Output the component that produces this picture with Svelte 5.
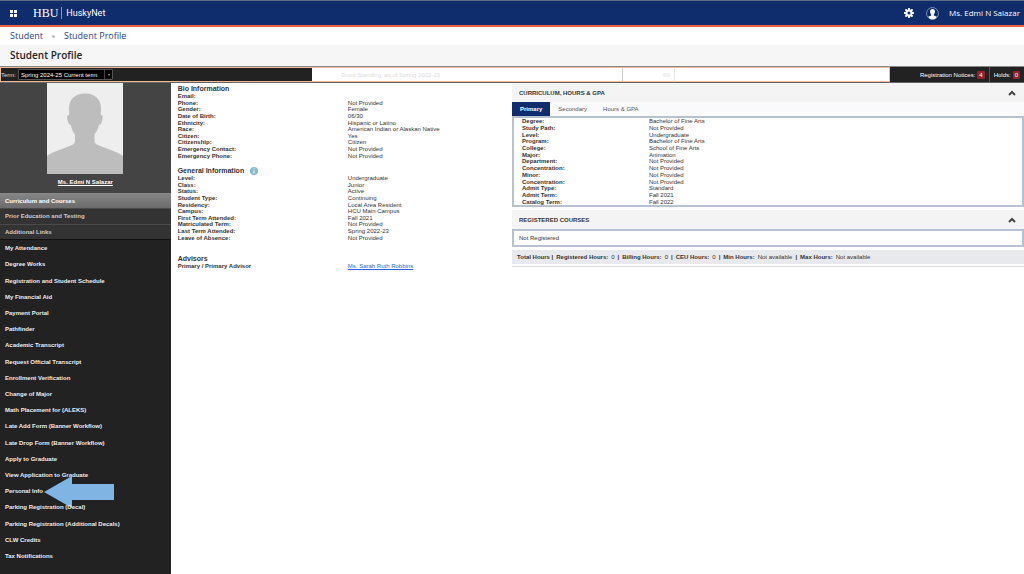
<script lang="ts">
  interface Row {
    label: string;
    value: string;
  }

  const bio: Row[] = [
    { label: 'Email:', value: '' },
    { label: 'Phone:', value: 'Not Provided' },
    { label: 'Gender:', value: 'Female' },
    { label: 'Date of Birth:', value: '06/30' },
    { label: 'Ethnicity:', value: 'Hispanic or Latino' },
    { label: 'Race:', value: 'American Indian or Alaskan Native' },
    { label: 'Citizen:', value: 'Yes' },
    { label: 'Citizenship:', value: 'Citizen' },
    { label: 'Emergency Contact:', value: 'Not Provided' },
    { label: 'Emergency Phone:', value: 'Not Provided' }
  ];

  const general: Row[] = [
    { label: 'Level:', value: 'Undergraduate' },
    { label: 'Class:', value: 'Junior' },
    { label: 'Status:', value: 'Active' },
    { label: 'Student Type:', value: 'Continuing' },
    { label: 'Residency:', value: 'Local Area Resident' },
    { label: 'Campus:', value: 'HCU Main Campus' },
    { label: 'First Term Attended:', value: 'Fall 2021' },
    { label: 'Matriculated Term:', value: 'Not Provided' },
    { label: 'Last Term Attended:', value: 'Spring 2022-23' },
    { label: 'Leave of Absence:', value: 'Not Provided' }
  ];

  const curriculum: Row[] = [
    { label: 'Degree:', value: 'Bachelor of Fine Arts' },
    { label: 'Study Path:', value: 'Not Provided' },
    { label: 'Level:', value: 'Undergraduate' },
    { label: 'Program:', value: 'Bachelor of Fine Arts' },
    { label: 'College:', value: 'School of Fine Arts' },
    { label: 'Major:', value: 'Animation' },
    { label: 'Department:', value: 'Not Provided' },
    { label: 'Concentration:', value: 'Not Provided' },
    { label: 'Minor:', value: 'Not Provided' },
    { label: 'Concentration:', value: 'Not Provided' },
    { label: 'Admit Type:', value: 'Standard' },
    { label: 'Admit Term:', value: 'Fall 2021' },
    { label: 'Catalog Term:', value: 'Fall 2022' }
  ];

  const sections = ['Curriculum and Courses', 'Prior Education and Testing', 'Additional Links'];
  let section = $state('Curriculum and Courses');

  const links = [
    'My Attendance',
    'Degree Works',
    'Registration and Student Schedule',
    'My Financial Aid',
    'Payment Portal',
    'Pathfinder',
    'Academic Transcript',
    'Request Official Transcript',
    'Enrollment Verification',
    'Change of Major',
    'Math Placement for (ALEKS)',
    'Late Add Form (Banner Workflow)',
    'Late Drop Form (Banner Workflow)',
    'Apply to Graduate',
    'View Application to Graduate',
    'Personal Info',
    'Parking Registration (Decal)',
    'Parking Registration (Additional Decals)',
    'CLW Credits',
    'Tax Notifications'
  ];
  const pointedLink = 'Personal Info';

  const tabs = ['Primary', 'Secondary', 'Hours & GPA'];
  let tab = $state('Primary');

  let showCurriculum = $state(true);
  let showCourses = $state(true);
</script>

{#snippet rows(items: Row[])}
  {#each items as item}
    <div class="row">
      <dt>{item.label}</dt>
      <dd>{item.value}</dd>
    </div>
  {/each}
{/snippet}

{#snippet chevron(open: boolean)}
  <svg class="chevron" class:closed={!open} viewBox="0 0 8 6" aria-hidden="true">
    <path d="M1 5 4 2l3 3" fill="none" stroke="#444" stroke-width="2" />
  </svg>
{/snippet}

<div class="page">
  <header class="navbar">
    <button class="icon-btn" aria-label="Menu">
      <svg class="apps" viewBox="0 0 7 7" aria-hidden="true">
        <path d="M0 0h3v3H0zM4 0h3v3H4zM0 4h3v3H0zM4 4h3v3H4z" fill="#fff" />
      </svg>
    </button>
    <a class="brand" href="#home">
      <span class="brand-mark">HBU</span>
      <span class="brand-name">HuskyNet</span>
    </a>
    <div class="user">
      <button class="icon-btn" aria-label="Settings">
        <svg class="gear" viewBox="0 0 20 20" aria-hidden="true">
          <g fill="#fff">
            <rect x="8" y="0" width="4" height="20" rx="1" />
            <rect x="8" y="0" width="4" height="20" rx="1" transform="rotate(45 10 10)" />
            <rect x="8" y="0" width="4" height="20" rx="1" transform="rotate(90 10 10)" />
            <rect x="8" y="0" width="4" height="20" rx="1" transform="rotate(135 10 10)" />
            <circle cx="10" cy="10" r="7" />
          </g>
          <circle cx="10" cy="10" r="3" fill="#0f2c6d" />
        </svg>
      </button>
      <a class="account" href="#account">
        <svg class="avatar" viewBox="0 0 24 24" aria-hidden="true">
          <circle cx="12" cy="12" r="11" fill="none" stroke="#8fa0c8" stroke-width="1.5" />
          <path
            d="M12 3.500c3 0 4.500 2 4.500 5 0 2.200-.8 4-2 5v2l5.500 2.300c-1.500 3-4.500 5-8 5s-6.500-2-8-5L9.500 15.500v-2c-1.200-1-2-2.800-2-5 0-3 1.500-5 4.500-5z"
            fill="#fff"
          />
        </svg>
        Ms. Edmi N Salazar
      </a>
    </div>
  </header>

  <nav class="breadcrumb" aria-label="Breadcrumb">
    <a href="#student">Student</a>
    <span class="dot"></span>
    <a href="#profile">Student Profile</a>
  </nav>
  <h1>Student Profile</h1>

  <div class="status">
    <div class="term">
      <label for="term">Term:</label>
      <div class="select">
        <select id="term">
          <option>Spring 2024-25 Current term</option>
        </select>
      </div>
    </div>
    <div class="standing">Good Standing, as of Spring 2022-23</div>
    <div class="hours">60</div>
    <div class="blank"></div>
    <div class="notices">
      <span class="notice">Registration Notices: <b>4</b></span>
      <span class="notice">Holds: <b>0</b></span>
    </div>
  </div>

  <div class="columns">
    <aside>
      <div class="profile">
        <svg class="photo" viewBox="0 0 76 91" role="img" aria-label="Profile photo">
          <rect width="76" height="91" fill="#eee" />
          <path
            d="M38 10.500c-10 0-16.500 6-16 16l.3 5.500c-2 0-2.500 1.500-2 4 .5 2.800 1.600 6 3.500 6 .8 4 2.200 7 4.200 9.500V58c0 2-1 3-3 4L6 69.500c-2 1-4 2-6 3.500v18h76V73c-2-1.500-4-2.500-6-3.500L51 62c-2-1-3.500-2-3.500-4v-6.500c2-2.500 3.700-5.500 4.500-9.500 2 0 3-3.200 3.500-6 .5-2.500 0-4-1.800-4l.3-5.500c.5-10-6-16-16-16z"
            fill="#bdbdbd"
          />
        </svg>
        <a href="#me">Ms. Edmi N Salazar</a>
      </div>
      <div class="sections">
        {#each sections as name}
          <button class:active={section === name} onclick={() => (section = name)}>{name}</button>
        {/each}
      </div>
      <ul class="links">
        {#each links as link}
          <li>
            <a href="#link">{link}</a>
            {#if link === pointedLink}
              <svg class="arrow" viewBox="0 0 70 34" aria-hidden="true">
                <path d="M0 17 28 1v8h42v16H28v8z" fill="#80b5e3" />
              </svg>
            {/if}
          </li>
        {/each}
      </ul>
    </aside>

    <main>
      <section>
        <h2>Bio Information</h2>
        <dl>{@render rows(bio)}</dl>
      </section>
      <section>
        <h2>
          General Information
          <svg class="info" viewBox="0 0 16 16" aria-hidden="true">
            <circle cx="8" cy="8" r="8" fill="#86b9c9" />
            <path d="M8 7v6M8 3v2" fill="none" stroke="#fff" stroke-width="2" />
          </svg>
        </h2>
        <dl>{@render rows(general)}</dl>
      </section>
      <section class="advisors">
        <h2>Advisors</h2>
        <div class="row">
          <strong>Primary / Primary Advisor</strong>
          <a href="#advisor">Ms. Sarah Ruth Robbins</a>
        </div>
      </section>
    </main>

    <div class="panels">
      <button class="panel-head" aria-expanded={showCurriculum} onclick={() => (showCurriculum = !showCurriculum)}>
        CURRICULUM, HOURS &amp; GPA
        {@render chevron(showCurriculum)}
      </button>
      {#if showCurriculum}
        <div class="tabs" role="tablist">
          {#each tabs as name}
            <button role="tab" aria-selected={tab === name} class:active={tab === name} onclick={() => (tab = name)}>
              {name}
            </button>
          {/each}
        </div>
        <dl class="box details">{@render rows(curriculum)}</dl>
      {/if}

      <button class="panel-head" aria-expanded={showCourses} onclick={() => (showCourses = !showCourses)}>
        REGISTERED COURSES
        {@render chevron(showCourses)}
      </button>
      {#if showCourses}
        <div class="box courses">Not Registered</div>
      {/if}
      <div class="totals">
        <span><b>Total Hours |</b></span>
        <span><b>Registered Hours:</b> 0</span>
        <b>|</b>
        <span><b>Billing Hours:</b> 0</span>
        <b>|</b>
        <span><b>CEU Hours:</b> 0</span>
        <b>|</b>
        <span><b>Min Hours:</b> Not available</span>
        <b>|</b>
        <span><b>Max Hours:</b> Not available</span>
      </div>
    </div>
  </div>
</div>

<style>
  :global(body) {
    background: #fff;
  }

  .page {
    display: flex;
    flex-direction: column;
    min-height: 100vh;
    font-family: 'Liberation Sans', Arial, sans-serif;
    font-size: 6px;
    line-height: 6px;
    color: #333;
  }

  .page * {
    box-sizing: border-box;
  }

  button {
    border: 0;
    padding: 0;
    background: none;
    font: inherit;
    color: inherit;
    text-align: left;
    cursor: pointer;
  }

  a {
    color: inherit;
    text-decoration: none;
  }

  svg {
    display: block;
    flex: none;
  }

  dl,
  dd,
  ul {
    margin: 0;
    padding: 0;
  }

  .navbar {
    display: flex;
    align-items: center;
    height: 27px;
    padding: 0 4px 0 10px;
    background: #0f2c6d;
    border-top: 1px solid #5c6b80;
    border-bottom: 2px solid #e9643c;
    color: #fff;
  }

  .apps {
    width: 7px;
    height: 7px;
  }

  .brand {
    display: flex;
    align-items: center;
    gap: 4px;
    margin-left: 16px;
    line-height: 12px;
  }

  .brand-mark {
    padding-right: 3px;
    border-right: 1px solid #8796b9;
    font-family: 'Liberation Serif', serif;
    font-size: 12px;
  }

  .brand-name {
    font-family: Roboto, sans-serif;
    font-size: 9px;
    font-weight: 400;
  }

  .user,
  .account {
    display: flex;
    align-items: center;
  }

  .user {
    gap: 12px;
    margin-left: auto;
    font-family: 'Open Sans', sans-serif;
    font-size: 8px;
    line-height: 12px;
  }

  .account {
    gap: 10px;
  }

  .gear {
    width: 10px;
    height: 10px;
  }

  .avatar {
    width: 13px;
    height: 13px;
  }

  .breadcrumb,
  h1 {
    display: flex;
    align-items: center;
    padding: 0 10px;
    font-family: 'Open Sans', sans-serif;
    font-size: 9px;
    line-height: 18px;
  }

  .breadcrumb {
    gap: 9px;
    color: #2b3f86;
  }

  .dot {
    width: 3px;
    height: 3px;
    border-radius: 50%;
    background: #bbb;
  }

  h1 {
    margin: 0;
    background: #f6f6f6;
    font-size: 10px;
    font-weight: 600;
    line-height: 21px;
    color: #222;
  }

  .status {
    display: grid;
    grid-template-columns: 312fr 311fr 52fr 215fr 134fr;
    height: 17px;
    border-top: 1px solid #888;
    border-bottom: 1px solid #666;
  }

  .status > div {
    display: flex;
    align-items: center;
    border: solid #f0b898;
    border-width: 1px 0;
  }

  .status > .term {
    gap: 2px;
    border-left-width: 1px;
    background: #222;
    color: #ddd;
  }

  .select {
    position: relative;
    width: 95px;
  }

  .select::before {
    content: '';
    position: absolute;
    right: 8px;
    top: 1px;
    bottom: 1px;
    border-left: 1px solid #444;
  }

  .select::after {
    content: '';
    position: absolute;
    right: 3px;
    top: 5px;
    border: 1px solid transparent;
    border-top: 2px solid #aaa;
  }

  select {
    display: block;
    width: 100%;
    height: 11px;
    padding: 0 2px;
    border: 1px solid #555;
    border-radius: 1px;
    appearance: none;
    background: #000;
    color: #fff;
    font: inherit;
  }

  .status > .standing {
    padding-left: 29px;
    border-right: 1px solid #ccc;
    color: #ddd;
  }

  .status > .hours {
    justify-content: flex-end;
    padding-right: 4px;
    border-right: 1px solid #e8e8e8;
    color: #ddd;
  }

  .status > .blank {
    border-right-width: 1px;
  }

  .status > .notices {
    justify-content: flex-end;
    align-items: stretch;
    border: 0;
    background: #222;
    color: #fff;
  }

  .notice {
    display: flex;
    align-items: center;
    gap: 2px;
    padding: 0 4px;
  }

  .notice + .notice {
    border-left: 1px solid #555;
  }

  .notice b {
    padding: 1px 2px;
    border-radius: 1px;
    background: #93232b;
    font-weight: 400;
  }

  .columns {
    flex: 1;
    display: grid;
    grid-template-columns: 1fr 2fr 3fr;
  }

  aside {
    display: flex;
    flex-direction: column;
    background: #222;
    color: #fff;
    font-weight: 700;
  }

  .profile {
    display: flex;
    flex-direction: column;
    align-items: center;
    gap: 5px;
    padding-bottom: 8px;
    background: #444;
  }

  .profile a {
    text-decoration: underline;
  }

  .photo {
    width: 76px;
    height: 91px;
  }

  .sections {
    display: flex;
    flex-direction: column;
    min-height: 46px;
  }

  .sections button {
    flex: 1;
    padding: 0 5px;
    border-top: 1px solid #4a4a4a;
    background: #333;
    color: #ccc;
  }

  .sections .active {
    border-color: #888;
    background: linear-gradient(#858585, #6c6c6c);
    color: #fff;
  }

  .links {
    display: flex;
    flex-direction: column;
    min-height: 325px;
    border-top: 1px solid #111;
    list-style: none;
    color: #eee;
  }

  .links li {
    position: relative;
    flex: 1;
    display: flex;
    align-items: center;
    padding: 0 5px;
  }

  .arrow {
    position: absolute;
    left: 44px;
    top: -8px;
    width: 70px;
    height: 34px;
  }

  main {
    display: flex;
    flex-direction: column;
    gap: 8px;
    padding: 2px 0 0 7px;
  }

  h2 {
    display: flex;
    align-items: center;
    gap: 6px;
    margin: 0;
    font-size: 7px;
    line-height: 8px;
  }

  main dl {
    display: flex;
    flex-direction: column;
    min-height: 66px;
  }

  .info {
    width: 8px;
    height: 8px;
  }

  .row {
    flex: 1;
    display: grid;
    grid-template-columns: 170fr 164fr;
    align-items: center;
  }

  dt {
    font-weight: 700;
  }

  .advisors {
    padding-top: 6px;
  }

  .advisors a {
    color: #2962e8;
    text-decoration: underline;
  }

  .panels {
    display: flex;
    flex-direction: column;
  }

  .panel-head {
    display: flex;
    align-items: center;
    justify-content: space-between;
    min-height: 19px;
    padding: 0 8px 0 7px;
    background: #f4f4f4;
    font-weight: 700;
  }

  .chevron {
    width: 8px;
    height: 6px;
  }

  .closed {
    transform: rotate(180deg);
  }

  .tabs {
    display: flex;
    background: #fafafc;
  }

  .tabs button {
    padding: 4px 8px;
    color: #555;
  }

  .tabs .active {
    background: #0f2c6d;
    color: #fff;
    font-weight: 700;
  }

  .box {
    border: 2px solid #b6c2d0;
  }

  .details {
    display: flex;
    flex-direction: column;
    min-height: 91px;
    margin-bottom: 3px;
    padding: 0 8px;
  }

  .details .row {
    grid-template-columns: 127fr 365fr;
  }

  .courses {
    padding: 4px 5px;
    line-height: 6px;
  }

  .totals {
    display: flex;
    flex-wrap: wrap;
    gap: 3px;
    margin-top: 3px;
    padding: 4px 5px;
    background: #e8e9ec;
    box-shadow: 0 2px #fff, 0 3px #ddd;
  }

  .totals span {
    display: flex;
    gap: 3px;
  }
</style>
